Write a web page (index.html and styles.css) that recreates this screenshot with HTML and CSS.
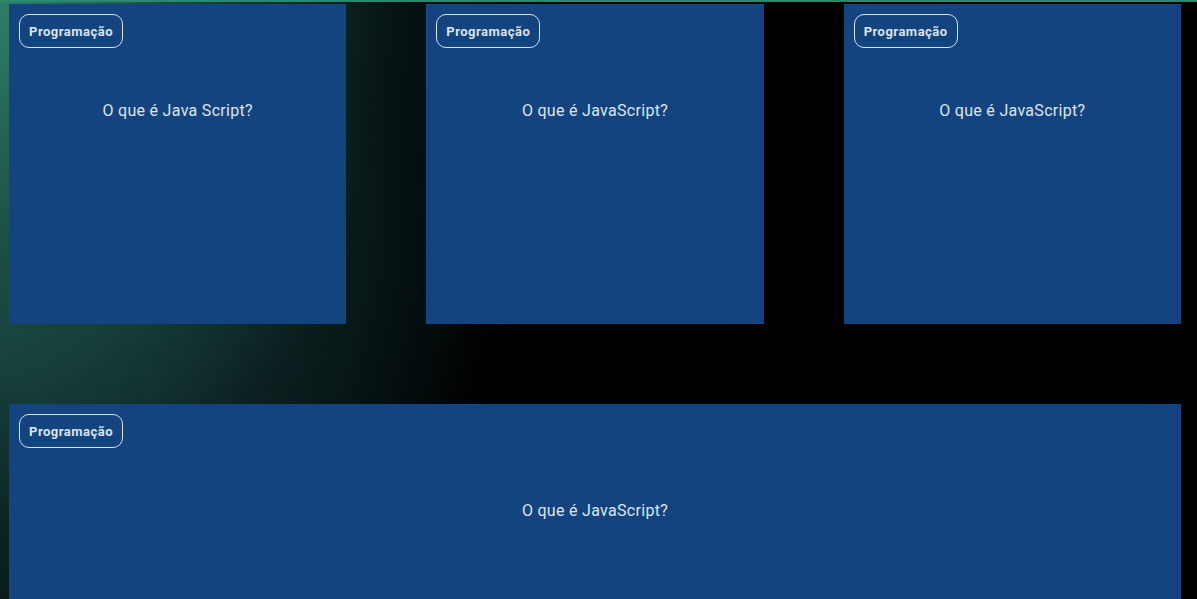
FILE: index.html
```html
<!DOCTYPE html>
<html lang="pt-BR">
<head>
<meta charset="utf-8">
<title>Cards</title>
<link rel="stylesheet" href="styles.css">
</head>
<body>
<div class="topline"></div>
<main class="grid">
  <article class="card">
    <span class="tag">Programação</span>
    <h2 class="title">O que é Java Script?</h2>
  </article>
  <article class="card">
    <span class="tag">Programação</span>
    <h2 class="title">O que é JavaScript?</h2>
  </article>
  <article class="card">
    <span class="tag">Programação</span>
    <h2 class="title">O que é JavaScript?</h2>
  </article>
  <article class="card wide">
    <span class="tag">Programação</span>
    <h2 class="title">O que é JavaScript?</h2>
  </article>
</main>
</body>
</html>
```

FILE: styles.css
```css
* { box-sizing: border-box; }
html, body { height: 100%; }
body {
  margin: 0;
  overflow: hidden;
  font-family: Roboto, "Liberation Sans", sans-serif;
  background:
    radial-gradient(ellipse 560px 760px at 0 0, rgba(46,128,102,1) 0%, rgba(32,90,78,0.75) 35%, rgba(15,45,45,0.45) 70%, rgba(0,0,0,0) 100%),
    radial-gradient(ellipse 800px 700px at 0 60%, rgba(18,50,52,0.85) 0%, rgba(0,0,0,0) 60%),
    #000;
}
.topline {
  height: 2px;
  background: #2b8a6b;
}
.grid {
  display: grid;
  grid-template-columns: repeat(3, 1fr);
  column-gap: 80px;
  row-gap: 80px;
  width: 1172px;
  margin: 2px 0 0 9px;
}
.card {
  background: #134480;
  height: 320px;
  padding: 10px;
  display: flex;
  flex-direction: column;
  align-items: flex-start;
}
.tag {
  display: inline-block;
  border: 1px solid #d9e1ee;
  border-radius: 10px;
  padding: 9px 9px 7px;
  font-size: 13px;
  font-weight: 700;
  color: #dbe3ef;
  line-height: 16px;
  letter-spacing: 0.5px;
}
.title {
  align-self: stretch;
  text-align: center;
  margin: 53px 0 0;
  font-size: 16px;
  font-weight: 400;
  color: #dde4ee;
  line-height: 20px;
  letter-spacing: 0.3px;
}
.wide {
  grid-column: 1 / -1;
}
```
